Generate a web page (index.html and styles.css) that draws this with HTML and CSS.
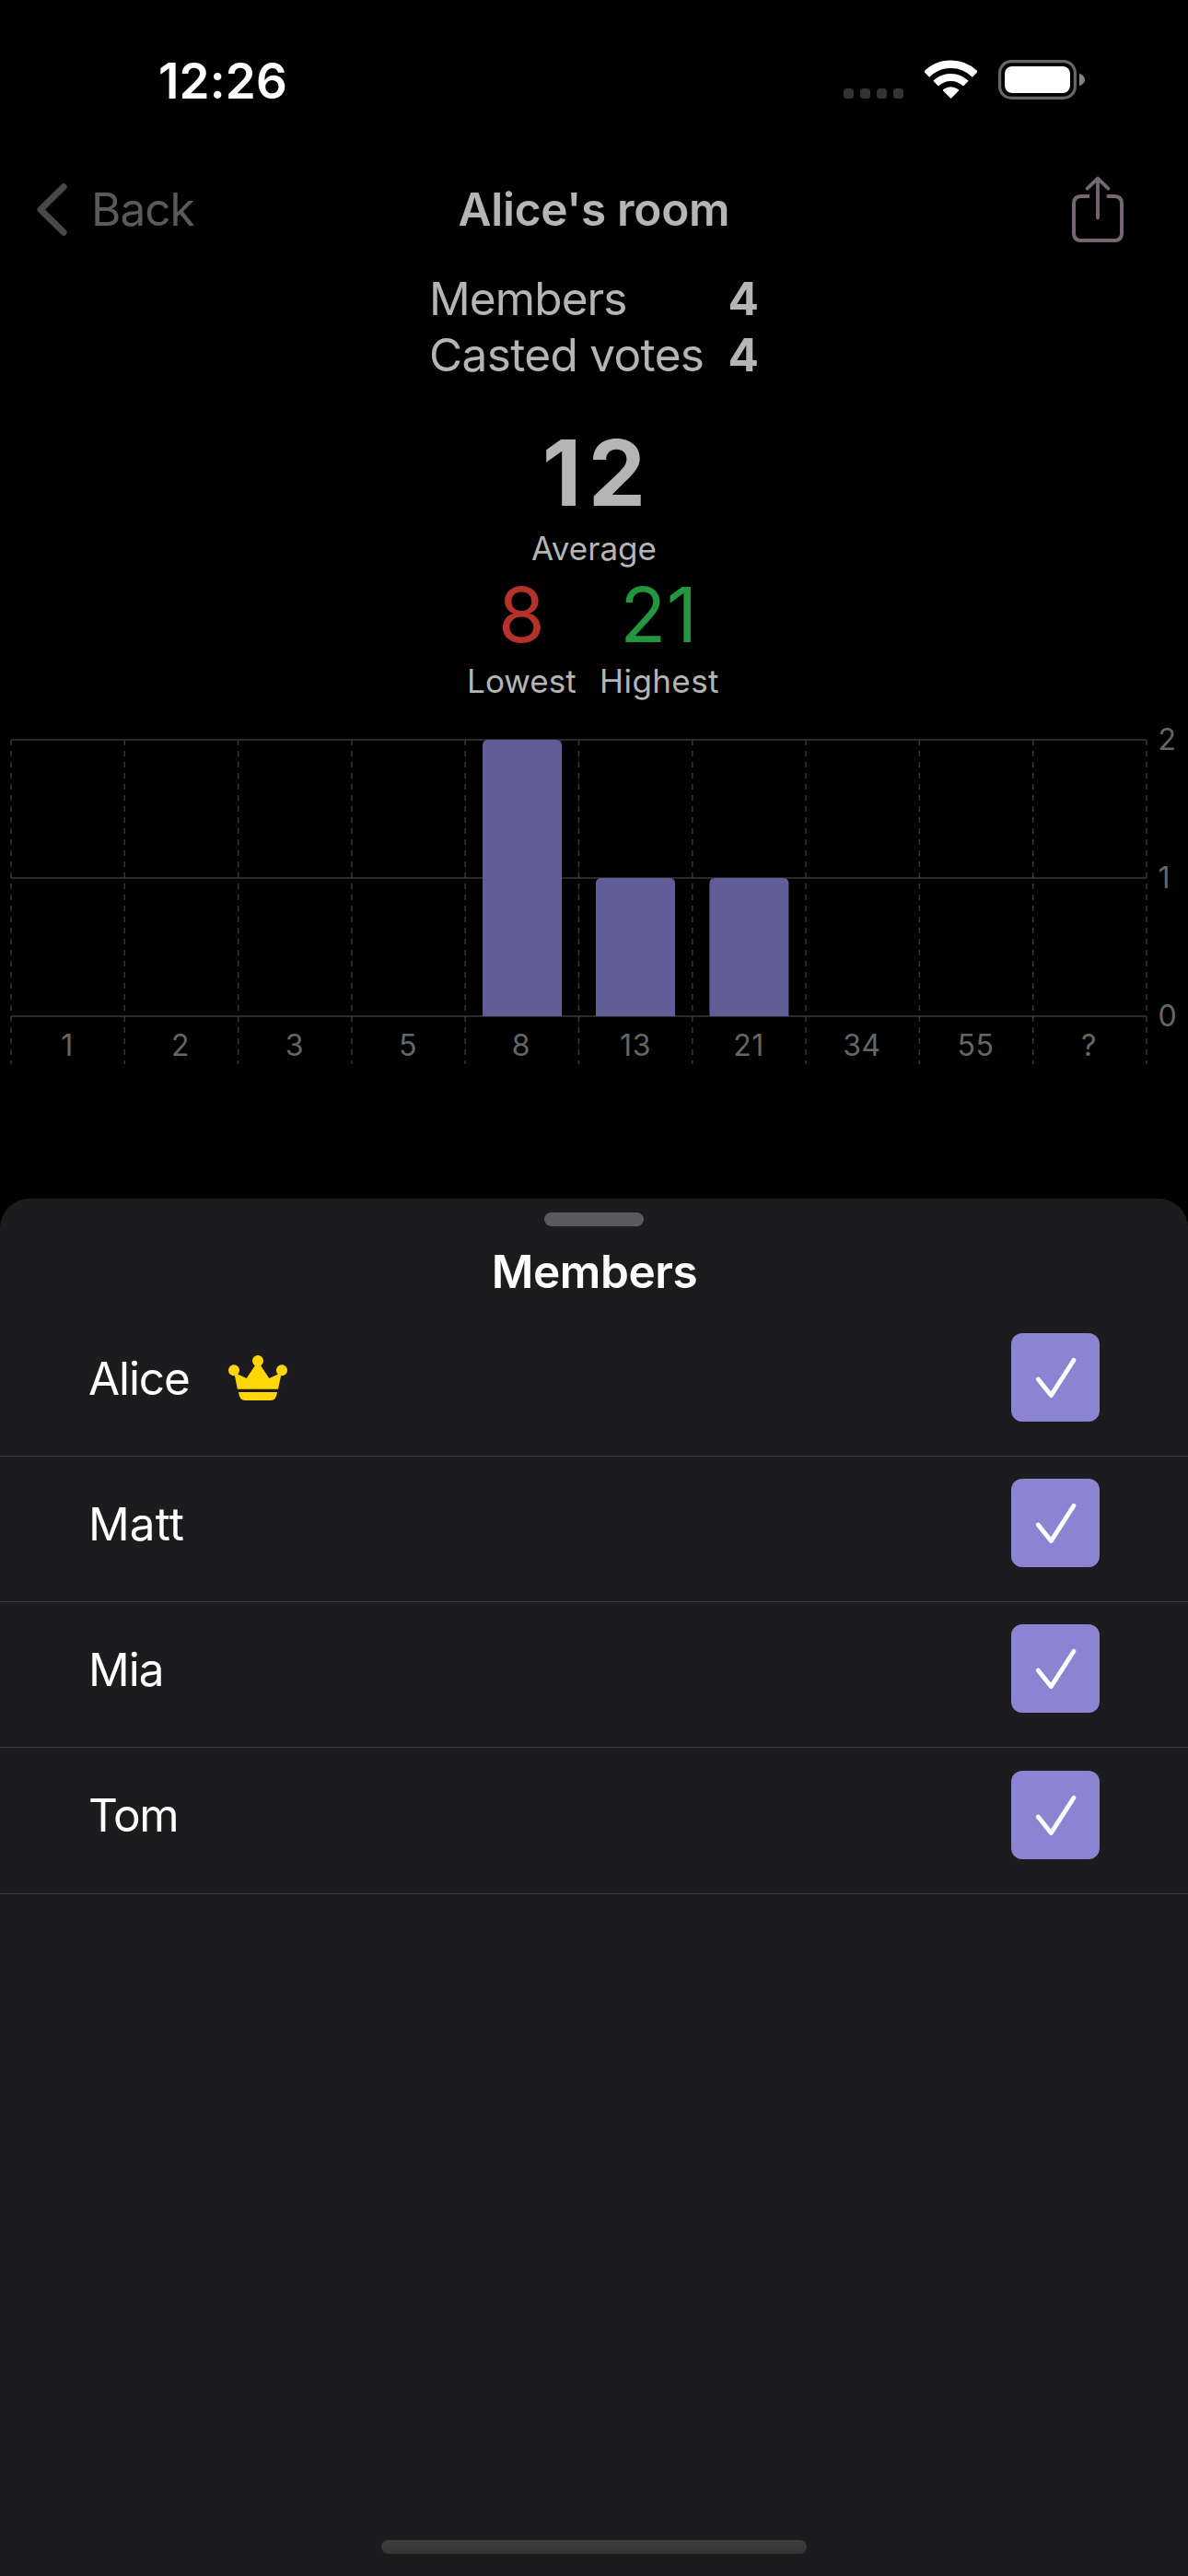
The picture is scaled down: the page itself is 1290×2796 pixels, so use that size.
FILE: index.html
```html
<!DOCTYPE html>
<html lang="en">
<head>
<meta charset="utf-8">
<title>Alice's room</title>
<link rel="stylesheet" href="styles.css">
</head>
<body>
<div class="screen">
  <main class="room">
    <div class="status-bar">
      <span class="time">12:26</span>
      <div class="status-icons">
        <svg width="65" height="43" viewBox="0 0 65 43" fill="#333">
          <rect x="0" y="31" width="11" height="11" rx="3.5"/>
          <rect x="18" y="31" width="11" height="11" rx="3.5"/>
          <rect x="36" y="31" width="11" height="11" rx="3.5"/>
          <rect x="54" y="31" width="11" height="11" rx="3.5"/>
        </svg>
        <svg width="57" height="43" viewBox="0 0 57 43" fill="none" stroke="#fff">
          <path d="M2.1 15.7A37.3 37.3 0 0 1 54.9 15.7" stroke-width="8.6"/>
          <path d="M12.1 25.7A23.2 23.2 0 0 1 44.9 25.7" stroke-width="8"/>
          <path d="M28.5 42L20 33.4Q19.4 32.6 20.4 32Q28.5 26.6 36.6 32Q37.6 32.6 37 33.4Z" fill="#fff" stroke="none"/>
        </svg>
        <svg width="94" height="43" viewBox="0 0 94 43">
          <rect x="1.6" y="1.6" width="81.8" height="39.8" rx="12.5" fill="none" stroke="#666" stroke-width="3.2"/>
          <rect x="7" y="7" width="71" height="29" rx="8" fill="#fff"/>
          <path d="M88 14.8Q94 17.2 94 21.5T88 28.2Z" fill="#858585"/>
        </svg>
      </div>
    </div>

    <header class="nav">
      <a class="back">
        <svg width="33" height="57" viewBox="0 0 33 57" fill="none" stroke="#484848" stroke-width="7" stroke-linecap="round" stroke-linejoin="round">
          <path d="M29.2 3.8L4 28.5L29.2 53.2"/>
        </svg>
        <span>Back</span>
      </a>
      <h1 class="nav-title">Alice's room</h1>
      <svg class="share" width="56" height="72" viewBox="0 0 56 72" fill="none" stroke="#746672" stroke-width="4">
        <path d="M19 22H10Q2 22 2 30V62Q2 70 10 70H46Q54 70 54 62V30Q54 22 46 22H37.7"/>
        <path d="M28 2.8V45.3M16.6 13.6L28 2.6L39.4 13.6" stroke-linecap="round" stroke-linejoin="round" stroke-width="3.8"/>
      </svg>
    </header>

    <dl class="votes">
      <dt class="votes-members">Members</dt><dd>4</dd>
      <dt>Casted votes</dt><dd>4</dd>
    </dl>

    <section class="average">
      <div class="average-value">12</div>
      <div class="label">Average</div>
    </section>

    <section class="range">
      <div class="stat">
        <div class="stat-value low">8</div>
        <div class="label">Lowest</div>
      </div>
      <div class="stat">
        <div class="stat-value high">21</div>
        <div class="label label-high">Highest</div>
      </div>
    </section>

    <svg class="chart" width="1290" height="394" viewBox="0 761 1290 394">
      <path class="grid" d="M12 803H1245M12 953H1245M12 1103H1245"/>
      <path class="grid dashed" d="M12 803V1155M135.3 803V1155M258.6 803V1155M381.9 803V1155M505.2 803V1155M628.5 803V1155M751.8 803V1155M875.1 803V1155M998.4 803V1155M1121.7 803V1155M1245 803V1155"/>
      <g fill="#615d96">
        <path d="M524 1103V809Q524 803 530 803H604Q610 803 610 809V1103Z"/>
        <path d="M647 1103V959Q647 953 653 953H727Q733 953 733 959V1103Z"/>
        <path d="M770.4 1103V959Q770.4 953 776.4 953H850.4Q856.4 953 856.4 959V1103Z"/>
      </g>
      <g class="axis axis-x">
        <text x="73" y="1146">1</text>
        <text x="196" y="1146">2</text>
        <text x="320" y="1146">3</text>
        <text x="443" y="1146">5</text>
        <text x="566" y="1146">8</text>
        <text x="690" y="1146">13</text>
        <text x="813" y="1146">21</text>
        <text x="936" y="1146">34</text>
        <text x="1059.5" y="1146">55</text>
        <text x="1182.5" y="1146">?</text>
      </g>
      <g class="axis">
        <text x="1257.5" y="814">2</text>
        <text x="1257.5" y="964">1</text>
        <text x="1257.5" y="1114">0</text>
      </g>
    </svg>
  </main>

  <section class="sheet">
    <div class="grabber"></div>
    <h2 class="sheet-title">Members</h2>
    <ul class="members">
      <li class="member">
        <span class="name name-alice">Alice</span>
        <svg class="crown" width="64" height="49" viewBox="0 0 64 49" fill="#ffd60a">
          <circle cx="6" cy="16.3" r="6"/><circle cx="32" cy="6" r="6"/><circle cx="58" cy="16.3" r="6"/>
          <path d="M6.5 20L10 20.5L19.7 25L29 11H35L44.3 25L54 20.5L57.5 20L54 36.7H9.8Z"/>
          <path d="M11 40H53Q52 49 46 49H18Q12 49 11 40Z"/>
        </svg>
        <span class="checkbox"><svg width="96" height="96" viewBox="0 0 96 96"><path d="M29.3 50L43.3 67.6L68 29.3"/></svg></span>
      </li>
      <li class="member">
        <span class="name name-matt">Matt</span>
        <span class="checkbox"><svg width="96" height="96" viewBox="0 0 96 96"><path d="M29.3 50L43.3 67.6L68 29.3"/></svg></span>
      </li>
      <li class="member">
        <span class="name">Mia</span>
        <span class="checkbox"><svg width="96" height="96" viewBox="0 0 96 96"><path d="M29.3 50L43.3 67.6L68 29.3"/></svg></span>
      </li>
      <li class="member">
        <span class="name name-tom">Tom</span>
        <span class="checkbox"><svg width="96" height="96" viewBox="0 0 96 96"><path d="M29.3 50L43.3 67.6L68 29.3"/></svg></span>
      </li>
    </ul>
    <div class="home-indicator"></div>
  </section>
</div>
</body>
</html>
```
FILE: styles.css
```css
* { box-sizing: border-box; margin: 0; padding: 0; }
html, body { background: #000; }
body { font-family: Inter, "Liberation Sans", sans-serif; font-size: 49.5px; color: #b5b5b5; }
svg { display: block; flex: none; }

.screen { width: 1290px; height: 2796px; display: flex; flex-direction: column; overflow: hidden; }
.room { height: 1301px; flex: none; }

.status-bar { height: 176px; padding: 0 112px 0 172px; display: flex; align-items: center; justify-content: space-between; }
.time { font-size: 53px; font-weight: 600; letter-spacing: .15px; color: #fff; line-height: 64px; }
.status-icons { display: flex; gap: 23px; margin-bottom: 3px; }

.nav { height: 102px; display: grid; grid-template-columns: 1fr auto 1fr; align-items: center; line-height: 60px; }
.back { display: flex; align-items: center; gap: 26px; padding-left: 40px; color: #5a5a5a; letter-spacing: -.95px; }
.nav-title { font-size: 49.5px; font-weight: 600; letter-spacing: -.27px; }
.share { justify-self: end; margin-right: 70px; }

.votes { display: grid; grid-template-columns: 324px 34px; padding-left: 466px; margin-top: 15.5px; line-height: 61px; letter-spacing: -.65px; }
.votes-members { letter-spacing: -.9px; }
.votes dd { font-weight: 700; letter-spacing: 0; padding-left: .5px; }

.average { margin-top: 37.5px; text-align: center; }
.average-value { font-size: 99px; font-weight: 700; line-height: 120px; letter-spacing: 7.2px; text-indent: 7px; }
.label { font-size: 35px; line-height: 43px; margin-top: 1px; letter-spacing: 0; }
.label-high { letter-spacing: .4px; }

.range { display: flex; justify-content: center; gap: 25.5px; padding-right: 2px; margin-top: 1px; text-align: center; }
.stat-value { font-size: 82px; line-height: 98px; padding-top: 1px; height: 98px; }
.stat .label { margin-top: 2px; }
.low { color: #b5322a; }
.high { color: #22973f; letter-spacing: .5px; margin-left: -1px; }

.grid { fill: none; stroke: #2a2a2b; stroke-width: 2; }
.dashed { stroke: #38383a; stroke-width: 1.5; stroke-dasharray: 6 6; }
.axis { font-size: 32px; fill: #666669; }
.axis-x { text-anchor: middle; letter-spacing: .5px; }

.sheet { flex: 1; background: #1c1c1e; border-radius: 32px 32px 0 0; display: flex; flex-direction: column; color: #fff; }
.grabber { width: 108px; height: 15px; border-radius: 8px; background: #5b5b5f; margin: 15px auto 0; }
.sheet-title { font-size: 49.5px; font-weight: 600; line-height: 60px; letter-spacing: -.4px; text-align: center; margin: 19px 0 13px; padding-left: 1px; }
.members { list-style: none; }
.member { height: 158px; padding: 24px 96px 0 96px; border-bottom: 1px solid #3d3d40; display: flex; }
.member:last-child { height: 159px; padding-top: 25px; }
.name { line-height: 98px; height: 96px; letter-spacing: -.95px; }
.name-alice { letter-spacing: -1.1px; }
.name-matt { letter-spacing: .1px; }
.name-tom { letter-spacing: -1.2px; line-height: 96px; }
.crown { margin: 24px 0 0 42.5px; }
.checkbox { width: 96px; height: 96px; margin-left: auto; border-radius: 12px; background: #8a84d3; }
.checkbox path { fill: none; stroke: #fff; stroke-width: 4.8; stroke-linecap: round; stroke-linejoin: round; }
.home-indicator { width: 462px; height: 15px; border-radius: 8px; background: linear-gradient(#3f3f3f, #333); margin: auto auto 24px; }
```
